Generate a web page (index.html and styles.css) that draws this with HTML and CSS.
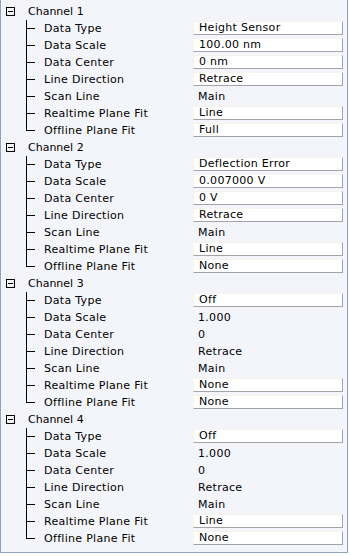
FILE: index.html
```html
<!DOCTYPE html>
<html lang="en">
<head>
  <meta charset="UTF-8">
  <title>Channel Settings</title>
  <link rel="stylesheet" href="styles.css">
</head>
<body>
  <div class="panel">
    <div class="channel">
      <div class="channel-head"><span class="toggle"></span><span class="channel-name">Channel 1</span></div>
      <ul class="props">
        <li class="prop"><span class="branch"></span><span class="prop-label">Data Type</span><span class="prop-value field">Height Sensor</span></li>
        <li class="prop"><span class="branch"></span><span class="prop-label">Data Scale</span><span class="prop-value field">100.00 nm</span></li>
        <li class="prop"><span class="branch"></span><span class="prop-label">Data Center</span><span class="prop-value field">0 nm</span></li>
        <li class="prop"><span class="branch"></span><span class="prop-label">Line Direction</span><span class="prop-value field">Retrace</span></li>
        <li class="prop"><span class="branch"></span><span class="prop-label">Scan Line</span><span class="prop-value">Main</span></li>
        <li class="prop"><span class="branch"></span><span class="prop-label">Realtime Plane Fit</span><span class="prop-value field">Line</span></li>
        <li class="prop last"><span class="branch"></span><span class="prop-label">Offline Plane Fit</span><span class="prop-value field">Full</span></li>
      </ul>
    </div>
    <div class="channel">
      <div class="channel-head"><span class="toggle"></span><span class="channel-name">Channel 2</span></div>
      <ul class="props">
        <li class="prop"><span class="branch"></span><span class="prop-label">Data Type</span><span class="prop-value field">Deflection Error</span></li>
        <li class="prop"><span class="branch"></span><span class="prop-label">Data Scale</span><span class="prop-value field">0.007000 V</span></li>
        <li class="prop"><span class="branch"></span><span class="prop-label">Data Center</span><span class="prop-value field">0 V</span></li>
        <li class="prop"><span class="branch"></span><span class="prop-label">Line Direction</span><span class="prop-value field">Retrace</span></li>
        <li class="prop"><span class="branch"></span><span class="prop-label">Scan Line</span><span class="prop-value">Main</span></li>
        <li class="prop"><span class="branch"></span><span class="prop-label">Realtime Plane Fit</span><span class="prop-value field">Line</span></li>
        <li class="prop last"><span class="branch"></span><span class="prop-label">Offline Plane Fit</span><span class="prop-value field">None</span></li>
      </ul>
    </div>
    <div class="channel">
      <div class="channel-head"><span class="toggle"></span><span class="channel-name">Channel 3</span></div>
      <ul class="props">
        <li class="prop"><span class="branch"></span><span class="prop-label">Data Type</span><span class="prop-value field">Off</span></li>
        <li class="prop"><span class="branch"></span><span class="prop-label">Data Scale</span><span class="prop-value">1.000</span></li>
        <li class="prop"><span class="branch"></span><span class="prop-label">Data Center</span><span class="prop-value">0</span></li>
        <li class="prop"><span class="branch"></span><span class="prop-label">Line Direction</span><span class="prop-value">Retrace</span></li>
        <li class="prop"><span class="branch"></span><span class="prop-label">Scan Line</span><span class="prop-value">Main</span></li>
        <li class="prop"><span class="branch"></span><span class="prop-label">Realtime Plane Fit</span><span class="prop-value field">None</span></li>
        <li class="prop last"><span class="branch"></span><span class="prop-label">Offline Plane Fit</span><span class="prop-value field">None</span></li>
      </ul>
    </div>
    <div class="channel">
      <div class="channel-head"><span class="toggle"></span><span class="channel-name">Channel 4</span></div>
      <ul class="props">
        <li class="prop"><span class="branch"></span><span class="prop-label">Data Type</span><span class="prop-value field">Off</span></li>
        <li class="prop"><span class="branch"></span><span class="prop-label">Data Scale</span><span class="prop-value">1.000</span></li>
        <li class="prop"><span class="branch"></span><span class="prop-label">Data Center</span><span class="prop-value">0</span></li>
        <li class="prop"><span class="branch"></span><span class="prop-label">Line Direction</span><span class="prop-value">Retrace</span></li>
        <li class="prop"><span class="branch"></span><span class="prop-label">Scan Line</span><span class="prop-value">Main</span></li>
        <li class="prop"><span class="branch"></span><span class="prop-label">Realtime Plane Fit</span><span class="prop-value field">Line</span></li>
        <li class="prop last"><span class="branch"></span><span class="prop-label">Offline Plane Fit</span><span class="prop-value field">None</span></li>
      </ul>
    </div>
  </div>
</body>
</html>
```

FILE: styles.css
```css
body {
  margin: 0;
  font-family: 'DejaVu Sans', sans-serif;
  font-size: 11px;
  color: #000;
  background-color: #fff;
}
.panel {
  width: 346px;
  padding: 3px 0 5px;
  background-color: #f4f5fa;
  border: 1px solid #8ea4bf;
  border-top: none;
}
.channel-head {
  display: flex;
  align-items: center;
  height: 17px;
}
.toggle {
  box-sizing: border-box;
  width: 9px;
  height: 9px;
  margin: 0 13px 0 5px;
  border: 1px solid #000;
  background: linear-gradient(#000, #000) center / 5px 1px no-repeat;
}
.props {
  list-style: none;
  margin: 0;
  padding: 0;
}
.prop {
  display: flex;
  align-items: center;
  height: 17px;
  padding-left: 25px;
  letter-spacing: 0.3px;
}
.branch {
  align-self: stretch;
  width: 9px;
  margin-right: 9px;
  background:
    linear-gradient(#000, #000) 0 0 / 1px 100% no-repeat,
    linear-gradient(#000, #000) 0 8px / 9px 1px no-repeat;
}
.prop.last .branch {
  background-size: 1px 9px, 9px 1px;
}
.prop-label {
  width: 149px;
  white-space: nowrap;
}
.prop-value {
  box-sizing: border-box;
  width: 150px;
  padding-left: 5px;
  white-space: nowrap;
}
.field {
  align-self: flex-start;
  height: 14px;
  margin-top: 1px;
  line-height: 12px;
  background-color: #fff;
  border: 1px solid;
  border-color: #f4f4ea #a3a3ab #a3a3ab #f4f4ea;
}
```
